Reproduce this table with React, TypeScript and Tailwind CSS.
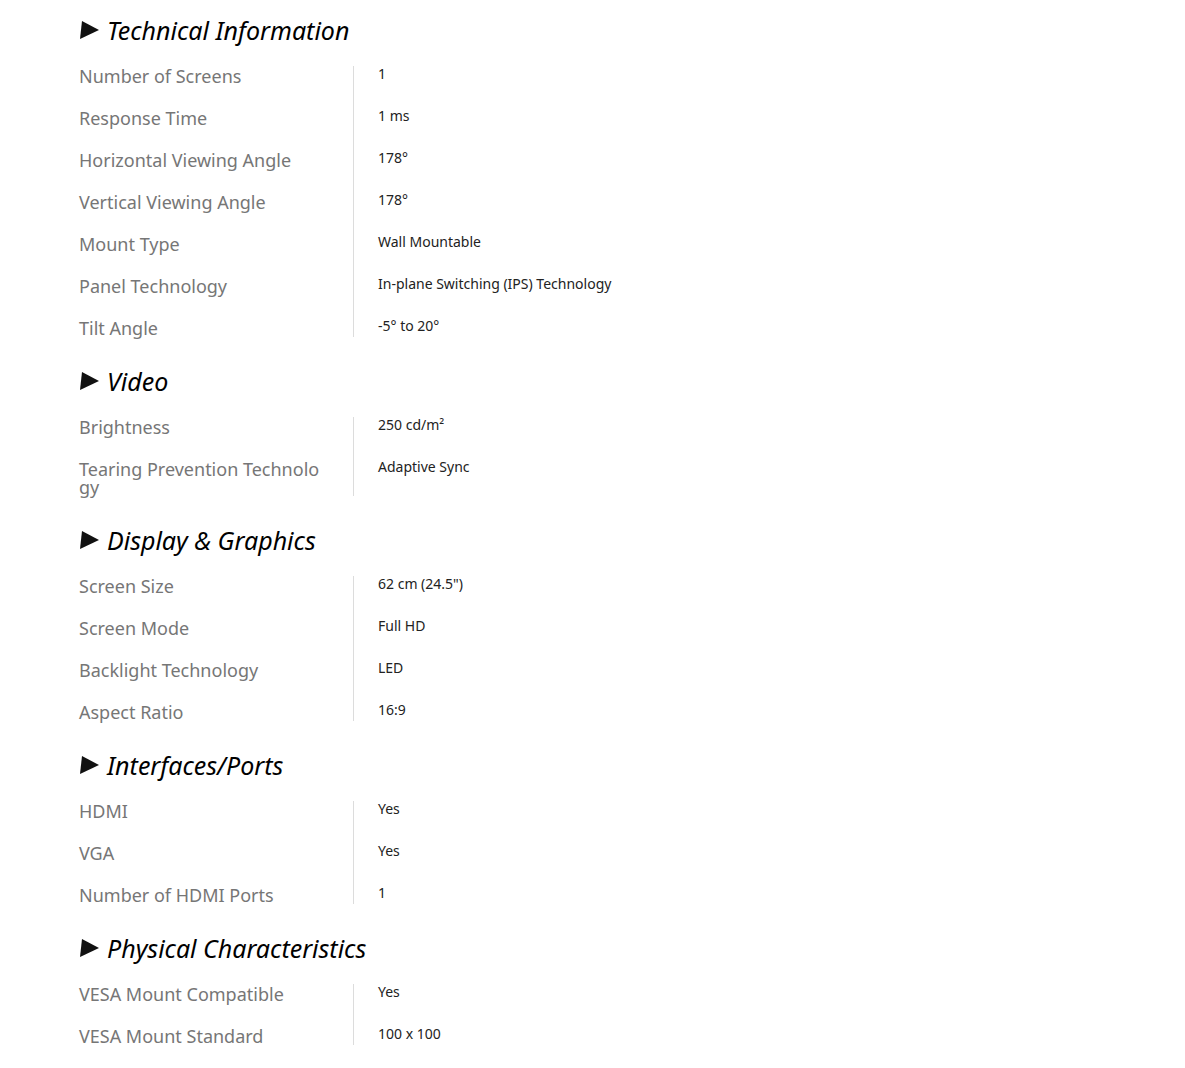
type Spec = { label: string; value: React.ReactNode };

const sections: { title: string; rows: Spec[] }[] = [
  {
    title: "Technical Information",
    rows: [
      { label: "Number of Screens", value: "1" },
      { label: "Response Time", value: "1 ms" },
      { label: "Horizontal Viewing Angle", value: "178°" },
      { label: "Vertical Viewing Angle", value: "178°" },
      { label: "Mount Type", value: "Wall Mountable" },
      { label: "Panel Technology", value: "In-plane Switching (IPS) Technology" },
      { label: "Tilt Angle", value: "-5° to 20°" },
    ],
  },
  {
    title: "Video",
    rows: [
      { label: "Brightness", value: "250 cd/m²" },
      { label: "Tearing Prevention Technology", value: "Adaptive Sync" },
    ],
  },
  {
    title: "Display & Graphics",
    rows: [
      { label: "Screen Size", value: '62 cm (24.5")' },
      { label: "Screen Mode", value: "Full HD" },
      { label: "Backlight Technology", value: "LED" },
      { label: "Aspect Ratio", value: "16:9" },
    ],
  },
  {
    title: "Interfaces/Ports",
    rows: [
      { label: "HDMI", value: "Yes" },
      { label: "VGA", value: "Yes" },
      { label: "Number of HDMI Ports", value: "1" },
    ],
  },
  {
    title: "Physical Characteristics",
    rows: [
      { label: "VESA Mount Compatible", value: "Yes" },
      { label: "VESA Mount Standard", value: "100 x 100" },
    ],
  },
];

function Arrow() {
  return (
    <svg width="20" height="20" viewBox="0 0 20 20" className="mr-[7px] shrink-0">
      <polygon points="2,1 19,10 0,19" fill="#111" />
    </svg>
  );
}

export default function App() {
  return (
    <main
      className="min-h-screen bg-white pt-[13px] pl-[80px]"
      style={{ fontFamily: '"Noto Sans", "Open Sans", sans-serif' }}
    >
      {sections.map((s, i) => (
        <section key={i} className={i === 0 ? "" : "mt-[27px]"}>
          {/* başlık */}
          <h2 className="flex items-center text-[25px] leading-[34px] italic text-black mb-[19px]">
            <Arrow />
            {s.title}
          </h2>
          <div className="flex flex-col -ml-px">
            {s.rows.map((r, j) => (
              <div key={j} className="group flex">
                <div className="w-[274px] pt-px pr-6 pb-[23px] group-last:pb-0 text-[18px] leading-[18px] text-[#767676] break-all">
                  {r.label}
                </div>
                <div className="border-l border-[#dcdcdc] pl-6 text-[14px] leading-4 text-[#222]">
                  {r.value}
                </div>
              </div>
            ))}
          </div>
        </section>
      ))}
    </main>
  );
}
